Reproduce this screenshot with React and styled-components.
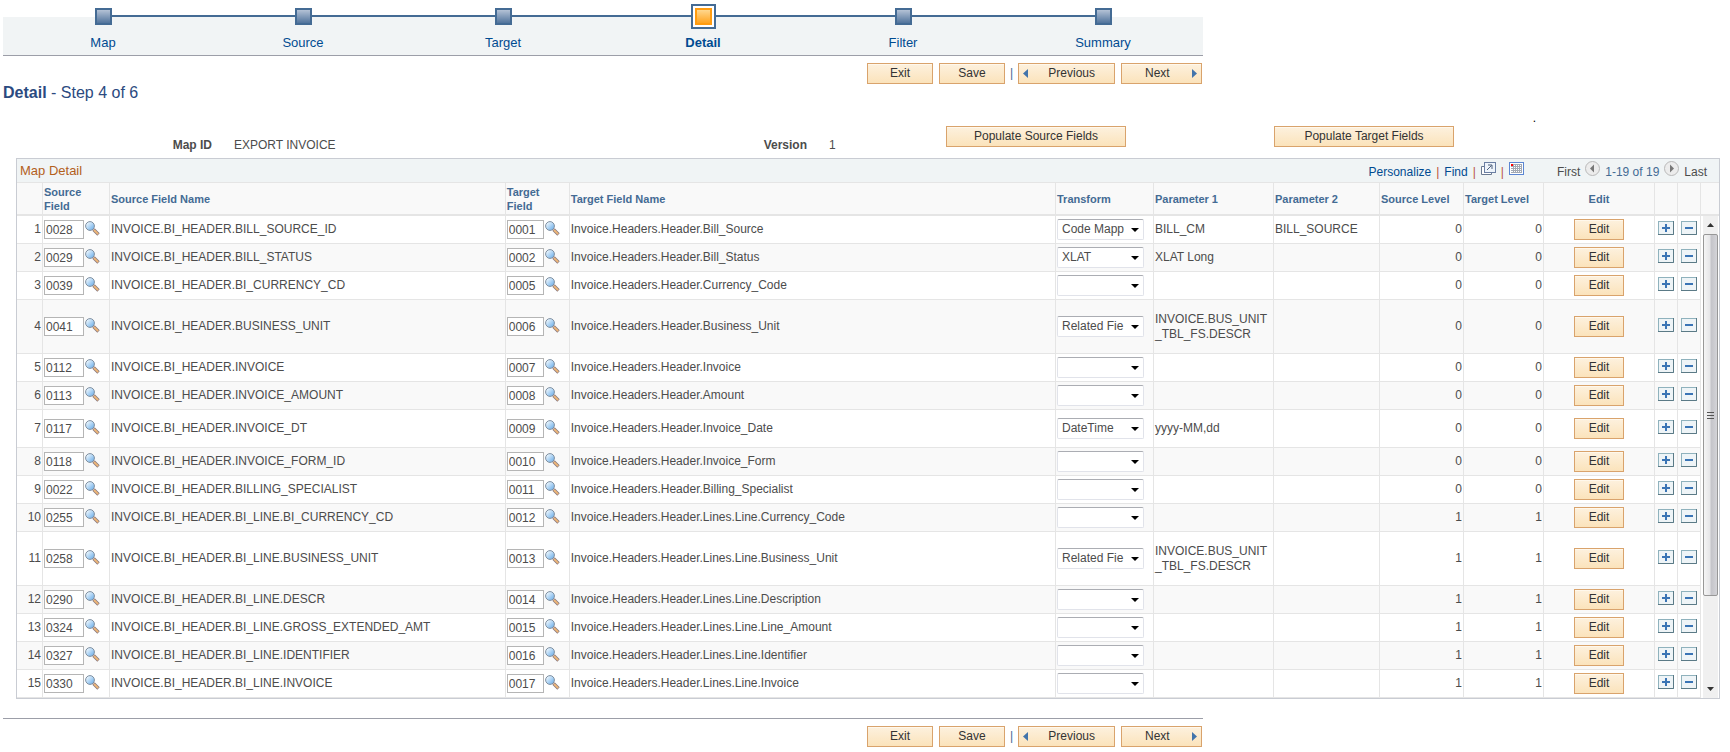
import React from "react";
import styled, { createGlobalStyle, css } from "styled-components";

const steps = ["Map", "Source", "Target", "Detail", "Filter", "Summary"];

const transforms = ["", "Code Mapp", "XLAT", "Related Fie", "DateTime"];

const rows = [
    { source: "0028", sourceName: "INVOICE.BI_HEADER.BILL_SOURCE_ID", target: "0001", targetName: "Invoice.Headers.Header.Bill_Source", transform: "Code Mapp", param1: ["BILL_CM"], param2: "BILL_SOURCE", level: 0 },
    { source: "0029", sourceName: "INVOICE.BI_HEADER.BILL_STATUS", target: "0002", targetName: "Invoice.Headers.Header.Bill_Status", transform: "XLAT", param1: ["XLAT Long"], level: 0 },
    { source: "0039", sourceName: "INVOICE.BI_HEADER.BI_CURRENCY_CD", target: "0005", targetName: "Invoice.Headers.Header.Currency_Code", level: 0 },
    { source: "0041", sourceName: "INVOICE.BI_HEADER.BUSINESS_UNIT", target: "0006", targetName: "Invoice.Headers.Header.Business_Unit", transform: "Related Fie", param1: ["INVOICE.BUS_UNIT", "_TBL_FS.DESCR"], level: 0, height: 54 },
    { source: "0112", sourceName: "INVOICE.BI_HEADER.INVOICE", target: "0007", targetName: "Invoice.Headers.Header.Invoice", level: 0 },
    { source: "0113", sourceName: "INVOICE.BI_HEADER.INVOICE_AMOUNT", target: "0008", targetName: "Invoice.Headers.Header.Amount", level: 0 },
    { source: "0117", sourceName: "INVOICE.BI_HEADER.INVOICE_DT", target: "0009", targetName: "Invoice.Headers.Header.Invoice_Date", transform: "DateTime", param1: ["yyyy-MM,dd"], level: 0, height: 38 },
    { source: "0118", sourceName: "INVOICE.BI_HEADER.INVOICE_FORM_ID", target: "0010", targetName: "Invoice.Headers.Header.Invoice_Form", level: 0 },
    { source: "0022", sourceName: "INVOICE.BI_HEADER.BILLING_SPECIALIST", target: "0011", targetName: "Invoice.Headers.Header.Billing_Specialist", level: 0 },
    { source: "0255", sourceName: "INVOICE.BI_HEADER.BI_LINE.BI_CURRENCY_CD", target: "0012", targetName: "Invoice.Headers.Header.Lines.Line.Currency_Code", level: 1 },
    { source: "0258", sourceName: "INVOICE.BI_HEADER.BI_LINE.BUSINESS_UNIT", target: "0013", targetName: "Invoice.Headers.Header.Lines.Line.Business_Unit", transform: "Related Fie", param1: ["INVOICE.BUS_UNIT", "_TBL_FS.DESCR"], level: 1, height: 54 },
    { source: "0290", sourceName: "INVOICE.BI_HEADER.BI_LINE.DESCR", target: "0014", targetName: "Invoice.Headers.Header.Lines.Line.Description", level: 1 },
    { source: "0324", sourceName: "INVOICE.BI_HEADER.BI_LINE.GROSS_EXTENDED_AMT", target: "0015", targetName: "Invoice.Headers.Header.Lines.Line.Line_Amount", level: 1 },
    { source: "0327", sourceName: "INVOICE.BI_HEADER.BI_LINE.IDENTIFIER", target: "0016", targetName: "Invoice.Headers.Header.Lines.Line.Identifier", level: 1 },
    { source: "0330", sourceName: "INVOICE.BI_HEADER.BI_LINE.INVOICE", target: "0017", targetName: "Invoice.Headers.Header.Lines.Line.Invoice", level: 1 },
];

const SearchIcon = () => (
    <svg width="15" height="15" viewBox="0 0 15 15" aria-hidden="true">
        <defs>
            <linearGradient id="lens" x1="0" y1="0" x2="1" y2="1">
                <stop offset="0.1" stopColor="#f4fbff" />
                <stop offset="0.9" stopColor="#6fb0ea" />
            </linearGradient>
        </defs>
        <path d="M8.5 8.5 L13.5 13.5" stroke="#8a7a80" strokeWidth="3.4" />
        <path d="M9 9 L13.2 13.2" stroke="#f0b878" strokeWidth="1.8" />
        <circle cx="5" cy="5" r="4.4" fill="url(#lens)" stroke="#7f8fa0" />
    </svg>
);

const ArrowIcon = ({ right }) => (
    <svg width="5" height="9" viewBox="0 0 5 9" aria-hidden="true">
        <path d={right ? "M0 0 L5 4.5 L0 9Z" : "M5 0 L0 4.5 L5 9Z"} fill="#4274ab" />
    </svg>
);

const PopupIcon = () => (
    <svg width="15" height="13" viewBox="0 0 15 13" aria-hidden="true">
        <path d="M3 4.5 H0.5 V12.5 H10.5 V10" fill="#fff" stroke="#6b7a92" />
        <rect x="3.5" y="0.5" width="11" height="10" fill="#eef4fb" stroke="#6b7fa3" />
        <path d="M6 8 L10.5 3.5 M7 3 H11 V7" fill="none" stroke="#4f617d" />
    </svg>
);

const GridIcon = () => (
    <svg width="15" height="13" viewBox="0 0 15 13" aria-hidden="true">
        <rect x="0.5" y="0.5" width="14" height="12" fill="#fff" stroke="#5b86d2" />
        <path d="M2 4.5 H13 M2 6.5 H13 M2 8.5 H13 M2 10.5 H13 M4.5 2 V11 M6.5 2 V11 M8.5 2 V11 M10.5 2 V11 M12.5 2 V11 M4 2.5 H13" stroke="#a3a9b3" />
        <rect x="2" y="2" width="2" height="2" fill="#f00" />
    </svg>
);

const PageIcon = ({ right }) => (
    <svg width="15" height="15" viewBox="0 0 15 15" aria-hidden="true">
        <circle cx="7.5" cy="7.5" r="7" fill="#ececec" stroke="#b9b9b9" />
        <path d={right ? "M6 3.5 L10 7.5 L6 11.5Z" : "M9 3.5 L5 7.5 L9 11.5Z"} fill="#777" />
    </svg>
);

const SignIcon = ({ plus }) => (
    <svg width="16" height="14" viewBox="0 0 16 14" aria-hidden="true">
        <rect x="0.5" y="0.5" width="15" height="13" fill="#eef4f7" stroke="#8fb2bd" />
        <path d="M0 13.5 H15.5 V0" fill="none" stroke="#5b7a86" />
        <path d={plus ? "M4 7 H12 M8 3 V11" : "M4 7 H12"} stroke="#3a74b5" strokeWidth="2" />
    </svg>
);

const Toolbar = () => (
    <Buttons>
        <Btn $w={66}>Exit</Btn>
        <Btn $w={66}>Save</Btn>
        <Divider>|</Divider>
        <Btn $w={97} $arrow="left"><ArrowIcon />Previous</Btn>
        <Btn $w={81} $arrow="right">Next<ArrowIcon right /></Btn>
    </Buttons>
);

const App = () => {

    return (
        <Page>
            <GlobalStyle />
            <Train>
                {steps.map((step) => (
                    <Step key={step}>
                        <Marker $active={step === "Detail"} />
                        <StepLink href="#" $active={step === "Detail"}>{step}</StepLink>
                    </Step>
                ))}
            </Train>
            <Toolbar />
            <Title><b>Detail</b> - Step 4 of 6</Title>

            <Dot>.</Dot>
            <Summary>
                <Label $w={209}>Map ID</Label>
                <Value $w={551}>EXPORT INVOICE</Value>
                <Label $w={44}>Version</Label>
                <Value $w={139}>1</Value>
                <Btn $w={180}>Populate Source Fields</Btn>
                <Btn $w={180} $ml={148}>Populate Target Fields</Btn>
            </Summary>

            <Panel>
                <PanelBar>
                    <PanelTitle>Map Detail</PanelTitle>
                    <Tools>
                        <a href="#">Personalize</a>
                        <Bar>|</Bar>
                        <a href="#">Find</a>
                        <Bar>|</Bar>
                        <IconBtn aria-label="Zoom grid" $lift><PopupIcon /></IconBtn>
                        <Bar>|</Bar>
                        <IconBtn aria-label="Download" $lift><GridIcon /></IconBtn>
                    </Tools>
                    <Pager>
                        <span>First</span>
                        <IconBtn aria-label="Previous rows" $lift><PageIcon /></IconBtn>
                        <Count>1-19 of 19</Count>
                        <IconBtn aria-label="Next rows" $lift><PageIcon right /></IconBtn>
                        <span>Last</span>
                    </Pager>
                </PanelBar>
                <PanelBody>
                    <Table>
                        <colgroup>
                            <Col $w="26px" />
                            <Col $w="67px" />
                            <Col $w="23.5%" />
                            <Col $w="64px" />
                            <Col />
                            <Col $w="98px" />
                            <Col $w="120px" />
                            <Col $w="106px" />
                            <Col $w="84px" />
                            <Col $w="80px" />
                            <Col $w="111px" />
                            <Col $w="23px" />
                            <Col $w="23px" />
                        </colgroup>
                        <thead>
                            <tr>
                                <Th />
                                <Th>Source<br />Field</Th>
                                <Th>Source Field Name</Th>
                                <Th>Target<br />Field</Th>
                                <Th>Target Field Name</Th>
                                <Th>Transform</Th>
                                <Th>Parameter 1</Th>
                                <Th>Parameter 2</Th>
                                <Th>Source Level</Th>
                                <Th>Target Level</Th>
                                <Th $align="center">Edit</Th>
                                <Th />
                                <Th />
                            </tr>
                        </thead>
                        <tbody>
                            {rows.map((row, i) => (
                                <Row key={row.source} $h={row.height}>
                                    <Td $align="right">{i + 1}</Td>
                                    <Td>
                                        <Lookup>
                                            <Field $w={40} aria-label={`Source field ${i + 1}`} defaultValue={row.source} />
                                            <IconBtn aria-label="Look up source field" $raised><SearchIcon /></IconBtn>
                                        </Lookup>
                                    </Td>
                                    <Td>{row.sourceName}</Td>
                                    <Td>
                                        <Lookup>
                                            <Field $w={37} aria-label={`Target field ${i + 1}`} defaultValue={row.target} />
                                            <IconBtn aria-label="Look up target field" $raised><SearchIcon /></IconBtn>
                                        </Lookup>
                                    </Td>
                                    <Td>{row.targetName}</Td>
                                    <Td>
                                        <SelectBox>
                                            <Select aria-label={`Transform ${i + 1}`} defaultValue={row.transform || ""}>
                                                {transforms.map((t) => <option key={t} value={t}>{t}</option>)}
                                            </Select>
                                        </SelectBox>
                                    </Td>
                                    <Td>{(row.param1 || []).map((line) => <div key={line}>{line}</div>)}</Td>
                                    <Td>{row.param2}</Td>
                                    <Td $align="right">{row.level}</Td>
                                    <Td $align="right">{row.level}</Td>
                                    <Td $align="center"><Btn $w={50}>Edit</Btn></Td>
                                    <Td $align="center"><IconBtn aria-label="Add row" $raised><SignIcon plus /></IconBtn></Td>
                                    <Td $align="center"><IconBtn aria-label="Delete row" $raised><SignIcon /></IconBtn></Td>
                                </Row>
                            ))}
                        </tbody>
                    </Table>
                    <ScrollColumn aria-hidden="true">
                        <ScrollHead />
                        <Track>
                            <ScrollEnd><svg width="7" height="4"><path d="M0 4 L3.5 0 L7 4Z" fill="#333" /></svg></ScrollEnd>
                            <Thumb>
                                <svg width="7" height="8"><path d="M0 1.5 H7 M0 4.5 H7 M0 7.5 H7" stroke="#555" /></svg>
                            </Thumb>
                            <ScrollEnd $bottom><svg width="7" height="4"><path d="M0 0 L3.5 4 L7 0Z" fill="#333" /></svg></ScrollEnd>
                        </Track>
                    </ScrollColumn>
                </PanelBody>
            </Panel>

            <Footer>
                <Toolbar />
            </Footer>
        </Page>
    );
}

export default App;

const GlobalStyle = createGlobalStyle`
  * {
    box-sizing: border-box;
  }
  body {
    margin: 0;
    background: #fff;
    color: #4c4c4c;
    font: 12px/15px "Liberation Sans", Arial, sans-serif;
  }
  a {
    color: #004b91;
    text-decoration: none;
  }
`

const Page = styled.div`
  padding: 4px 10px 4px 3px;
`

const Train = styled.nav`
  display: flex;
  max-width: 1200px;
  height: 52px;
  border-bottom: 1px solid #9c9ea8;
  background: linear-gradient(#fff 13px, #f1f4f5 13px);
`

const Step = styled.div`
  display: flex;
  flex: 1;
  flex-direction: column;
  align-items: center;
  background: linear-gradient(#446b94, #446b94) 0 11px / 100% 2px no-repeat;
  &:first-child {
    background-size: 50% 2px;
    background-position: 100% 11px;
  }
  &:last-child {
    background-size: 50% 2px;
  }
`

const Marker = styled.span`
  width: 17px;
  height: 17px;
  margin: 4px 0;
  border: 2px solid #446b94;
  background: linear-gradient(#b4c2d6, #52749c);
  ${({ $active }) => $active && css`
    width: 25px;
    height: 25px;
    margin: 0;
    padding: 2px;
    background: linear-gradient(#ffdf9f, #ff9c10) content-box;
    box-shadow: inset 0 0 0 2px #fff;
    outline: 2px solid #ff9c10;
    outline-offset: -6px;
  `}
`

const StepLink = styled.a`
  margin-top: 6px;
  font-size: 13px;
  font-weight: ${({ $active }) => $active ? "bold" : "normal"};
`

const Buttons = styled.div`
  display: flex;
  justify-content: flex-end;
  gap: 6px;
  max-width: 1199px;
  padding-top: 7px;
`

const Btn = styled.button`
  width: ${({ $w }) => $w}px;
  height: 21px;
  margin: 0 0 0 ${({ $ml }) => $ml || 0}px;
  padding: 0 6px;
  border: 1px solid #d9a36c;
  background: linear-gradient(#fdf1de, #fbe3bb);
  box-shadow: inset 0 1px #fff8ec;
  color: #333;
  font: inherit;
  ${({ $arrow }) => $arrow && css`
    display: flex;
    align-items: center;
    justify-content: space-between;
    padding: ${$arrow === "left" ? "0 19px 0 4px" : "0 4px 0 23px"};
  `}
`

const Divider = styled.span`
  display: flex;
  justify-content: center;
  width: 1px;
  color: #446b94;
  line-height: 21px;
`

const Title = styled.h1`
  margin: 0;
  color: #2b4a80;
  font-size: 16px;
  font-weight: normal;
  line-height: 18px;
`

const Dot = styled.div`
  margin-top: 9px;
  padding-right: 184px;
  color: #000;
  text-align: right;
`

const Summary = styled.div`
  display: flex;
  align-items: flex-start;
  margin-bottom: 5px;
`

const Label = styled.span`
  width: ${({ $w }) => $w}px;
  padding-top: 12px;
  text-align: right;
  font-weight: bold;
`

const Value = styled.span`
  width: ${({ $w }) => $w}px;
  padding: 12px 0 0 22px;
`

const Panel = styled.section`
  margin-left: 13px;
  border: 1px solid #c9ccd3;
`

const PanelBar = styled.div`
  display: flex;
  align-items: center;
  height: 24px;
  padding: 0 12px 0 3px;
  border-bottom: 1px solid #e5e5e5;
  background: #f0f4f5;
`

const PanelTitle = styled.h2`
  margin: 0 auto 0 0;
  color: #b3601c;
  font-size: 13px;
  font-weight: normal;
`

const Tools = styled.div`
  display: flex;
  align-items: center;
  gap: 5px;
  padding-top: 4px;
`

const Bar = styled.span`
  color: #b8503c;
`

const Pager = styled.div`
  display: flex;
  align-items: center;
  gap: 5px;
  margin-left: 33px;
  padding-top: 4px;
`

const Count = styled.span`
  color: #446b94;
`

const IconBtn = styled.button`
  display: inline-flex;
  margin: 0 0 ${({ $lift, $raised }) => $lift ? 8 : $raised ? 3 : 0}px;
  padding: 0;
  border: 0;
  background: none;
  vertical-align: middle;
`

const PanelBody = styled.div`
  display: flex;
`

const Table = styled.table`
  flex: 1;
  width: 100%;
  table-layout: fixed;
  border-collapse: separate;
  border-spacing: 0;
`

const Col = styled.col`
  width: ${({ $w }) => $w || "auto"};
`

const Th = styled.th`
  height: 33px;
  padding: 0 1px;
  border-right: 1px solid #e5e5e5;
  border-bottom: 2px solid #e5e5e5;
  background: #f9f9f9;
  color: #446b94;
  font-size: 11px;
  line-height: 14px;
  text-align: ${({ $align }) => $align || "left"};
  white-space: nowrap;
`

const Row = styled.tr`
  height: ${({ $h }) => $h || 28}px;
  &:nth-child(even) {
    background: #f9f9f9;
  }
`

const Td = styled.td`
  padding: 0 1px;
  border-right: 1px solid #e5e5e5;
  border-bottom: 1px solid #e5e5e5;
  text-align: ${({ $align }) => $align || "left"};
  white-space: nowrap;
`

const Lookup = styled.div`
  display: flex;
  align-items: center;
  gap: 1px;
`

const Field = styled.input`
  width: ${({ $w }) => $w}px;
  height: 19px;
  padding: 0 1px;
  border: 1px solid #b5b5b5;
  background: #fff;
  color: #4c4c4c;
  font: inherit;
`

const SelectBox = styled.div`
  position: relative;
  width: 87px;
  &::after {
    content: "";
    position: absolute;
    top: 9px;
    right: 5px;
    border: solid transparent;
    border-width: 4px 4px 0;
    border-top-color: #000;
    pointer-events: none;
  }
`

const Select = styled.select`
  display: block;
  width: 100%;
  height: 21px;
  padding: 0 18px 0 4px;
  appearance: none;
  border: 1px solid #e1e3ea;
  border-top-color: #abadb3;
  border-radius: 2px;
  background: #fff;
  color: #4c4c4c;
  font: inherit;
`

const ScrollColumn = styled.div`
  display: flex;
  flex: 0 0 18px;
  flex-direction: column;
`

const ScrollHead = styled.div`
  height: 33px;
  border-bottom: 2px solid #e5e5e5;
  background: #f9f9f9;
`

const Track = styled.div`
  display: flex;
  flex: 1;
  flex-direction: column;
  margin: 0 1px 0 2px;
  background: #f0f0f0;
`

const ScrollEnd = styled.div`
  display: flex;
  flex: 0 0 18px;
  align-items: center;
  justify-content: center;
  margin-top: ${({ $bottom }) => $bottom ? "auto" : "0"};
`

const Thumb = styled.div`
  display: flex;
  align-items: center;
  justify-content: center;
  height: 75%;
  border: 1px solid #979797;
  border-radius: 2px;
  background: linear-gradient(90deg, #f5f5f5, #e6e6e8 45%, #c4c4c9 55%, #d4d4d8);
`

const Footer = styled.footer`
  max-width: 1200px;
  margin-top: 19px;
  border-top: 1px solid #9c9ea8;
`
